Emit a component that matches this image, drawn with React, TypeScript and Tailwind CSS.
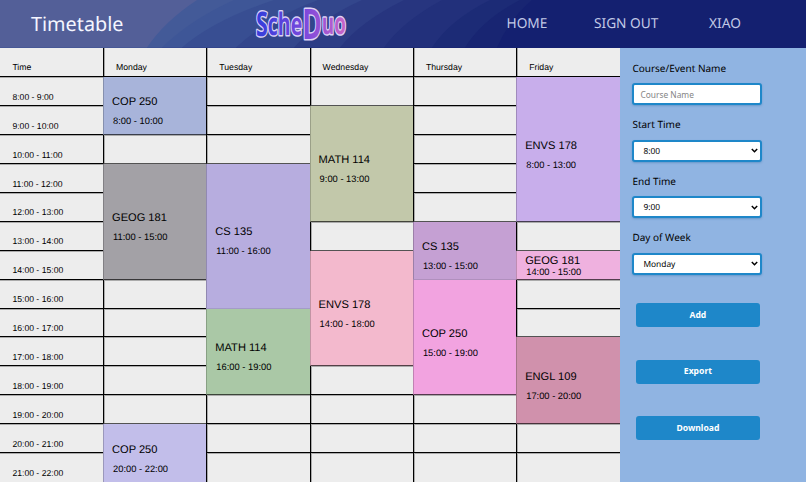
import React from "react";

type Block = { name?: string; time?: string; span: number; color?: string; tight?: boolean };
const free = (n: number): Block[] => Array.from({ length: n }, () => ({ span: 1 }));

const hours = Array.from({ length: 14 }, (_, i) => `${i + 8}:00 - ${i + 9}:00`);

const days: { day: string; blocks: Block[] }[] = [
  {
    day: "Monday",
    blocks: [
      { name: "COP 250", time: "8:00 - 10:00", span: 2, color: "bg-[#a8b4da]" },
      ...free(1),
      { name: "GEOG 181", time: "11:00 - 15:00", span: 4, color: "bg-[#a3a1a6]" },
      ...free(5),
      { name: "COP 250", time: "20:00 - 22:00", span: 2, color: "bg-[#c2beea]" },
    ],
  },
  {
    day: "Tuesday",
    blocks: [
      ...free(3),
      { name: "CS 135", time: "11:00 - 16:00", span: 5, color: "bg-[#b7addf]" },
      { name: "MATH 114", time: "16:00 - 19:00", span: 3, color: "bg-[#aac8a6]" },
      ...free(3),
    ],
  },
  {
    day: "Wednesday",
    blocks: [
      ...free(1),
      { name: "MATH 114", time: "9:00 - 13:00", span: 4, color: "bg-[#c2c8aa]" },
      ...free(1),
      { name: "ENVS 178", time: "14:00 - 18:00", span: 4, color: "bg-[#f3b9cd]" },
      ...free(4),
    ],
  },
  {
    day: "Thursday",
    blocks: [
      ...free(5),
      { name: "CS 135", time: "13:00 - 15:00", span: 2, color: "bg-[#c5a0d3]" },
      { name: "COP 250", time: "15:00 - 19:00", span: 4, color: "bg-[#f2a3e0]" },
      ...free(3),
    ],
  },
  {
    day: "Friday",
    blocks: [
      { name: "ENVS 178", time: "8:00 - 13:00", span: 5, color: "bg-[#c8aeeb]" },
      ...free(1),
      { name: "GEOG 181", time: "14:00 - 15:00", span: 1, color: "bg-[#efb1df]", tight: true },
      ...free(2),
      { name: "ENGL 109", time: "17:00 - 20:00", span: 3, color: "bg-[#d091ac]" },
      ...free(2),
    ],
  },
];

function Logo() {
  return (
    <svg className="h-[46px] w-[110px] overflow-visible" viewBox="0 0 110 46" aria-label="ScheDuo">
      <defs>
        <linearGradient id="ink" gradientUnits="userSpaceOnUse" x1="8" y1="0" x2="150" y2="0">
          <stop offset="0" stopColor="#3a3edb" />
          <stop offset=".5" stopColor="#7d48dc" />
          <stop offset="1" stopColor="#d369c4" />
        </linearGradient>
      </defs>
      <text
        transform="translate(6 0) scale(.63 1)"
        fontFamily="Open Sans, sans-serif"
        fontWeight="700"
        fill="url(#ink)"
        stroke="#dcd2f6"
        strokeWidth="3"
        strokeLinejoin="round"
        paintOrder="stroke"
      >
        <tspan x="0" y="36" fontSize="34">S</tspan>
        <tspan y="35" fontSize="31">che</tspan>
        <tspan y="38.5" fontSize="42">D</tspan>
        <tspan y="34" fontSize="30">uo</tspan>
      </text>
    </svg>
  );
}

function Header() {
  return (
    <header className="relative flex h-[47.6px] shrink-0 overflow-hidden bg-[#142070] text-[#c2c9e6]">
      <svg className="absolute inset-0 h-full w-full" viewBox="0 0 806 48" preserveAspectRatio="none">
        <path fill="#182572" d="M0 0H532Q509 20 497 48H0Z" />
        <path fill="#1c2b76" d="M0 0H520Q482 20 465 48H0Z" />
        <path fill="#22307b" d="M0 0H490Q450 20 432 48H0Z" />
        <path fill="#27357f" d="M0 0H442Q402 22 384 48H0Z" />
        <path fill="#2d3d85" d="M0 0H404Q360 22 340 48H0Z" />
        <path fill="#33468c" d="M0 0H362Q318 20 294 48H0Z" />
        <path fill="#384e92" d="M0 0H318Q265 20 236 48H0Z" />
        <path fill="#3e5697" d="M0 0H274Q214 20 182 48H0Z" />
        <path fill="#435a98" d="M0 0H234Q190 20 162 48H0Z" />
        <path fill="#535f98" d="M0 0H197Q164 22 147 48H0Z" />
      </svg>
      <h1 className="relative w-[250px] pl-[31px] pt-[9.6px] text-[19.8px] leading-7 text-[#f5f6ff]">Timetable</h1>
      <div className="relative w-[256.5px]"><Logo /></div>
      <nav className="relative flex pt-[14.4px] text-[13.7px] leading-5">
        <span className="w-[87.5px]">HOME</span>
        <span className="w-[115px]">SIGN OUT</span>
        <span>XIAO</span>
      </nav>
    </header>
  );
}

function DayColumn({ day, blocks }: { day: string; blocks: Block[] }) {
  return (
    <div className="grid min-w-0 grid-rows-[29.6px_repeat(13,28.93px)_29.93px]">
      <div className="border-b border-l border-black pl-[12px] pt-[13px] text-[8.7px] leading-3 shadow-[inset_1px_0_0_rgba(0,0,0,0.3)]">{day}</div>
      {blocks.map((b, i) => {
        const next = blocks[i + 1];
        if (!b.name) {
          return (
            <div
              key={i}
              className={`border-b border-l shadow-[inset_1px_1px_0_rgba(0,0,0,0.28)] ${next && next.name ? "border-b-black/65 border-l-black" : "border-black"}`}
            />
          );
        }
        return (
          <div
            key={i}
            style={{ gridRow: `span ${b.span}` }}
            className={`flex flex-col justify-center border-b border-l border-l-black/20 pl-[8px] ${next && next.name ? "border-b-black/10" : "border-b-black/65"} ${b.color} ${b.tight ? "pt-[5px]" : "gap-[6px] pt-[11.4px]"}`}
          >
            <div className={b.tight ? "text-[11.1px] leading-[11px]" : "text-[11.1px] leading-[14px]"}>{b.name}</div>
            <div className={b.tight ? "pl-[1px] text-[9.35px] leading-[11px]" : "pl-[1px] text-[9.35px] leading-3"}>{b.time}</div>
          </div>
        );
      })}
    </div>
  );
}

function Field({ label, value }: { label: string; value: string }) {
  return (
    <div className="h-[56.5px]">
      <div className="text-[10px] leading-4">{label}</div>
      <div className="mt-[7.2px] flex h-[22px] w-[130px] items-center justify-between rounded-[3px] border-2 border-[#1e87c9] bg-white pl-[9px] pr-[2px] text-[8.4px] shadow-[0_1px_2px_rgba(30,100,160,0.35)]">
        <span className="pt-[2px] leading-4">{value}</span>
        <svg width="7" height="5" viewBox="0 0 7 5"><path d="M.8 1 3.5 3.7 6.2 1" fill="none" stroke="#000" strokeWidth="1.5" /></svg>
      </div>
    </div>
  );
}

export default function App() {
  return (
    <div className="flex h-[482px] w-[806px] flex-col overflow-hidden bg-[#ededed] font-['Noto_Sans',sans-serif] text-black [text-rendering:geometricPrecision]">
      <Header />
      <main className="flex min-h-0 flex-1">
        <section className="grid h-[434.4px] w-[620px] shrink-0 grid-cols-[103px_repeat(4,103.3px)_1fr] content-start overflow-hidden font-['Liberation_Sans',sans-serif]">
          <div className="grid grid-rows-[29.6px_repeat(13,28.93px)_29.93px] text-[8.65px]">
            <div className="border-b border-black pl-[12.4px] pt-[13px] leading-3">Time</div>
            {hours.map((h) => (
              <div key={h} className="border-b border-black pl-[12.4px] pt-[13.6px] leading-3 shadow-[inset_0_1px_0_rgba(0,0,0,0.28)]">{h}</div>
            ))}
          </div>
          {days.map((d) => <DayColumn key={d.day} {...d} />)}
        </section>
        <aside className="flex-1 bg-[#90b4e2] pl-[12.4px] pt-[12.4px]">
          <div className="h-[56.5px]">
            <div className="text-[10px] leading-4">Course/Event Name</div>
            <input placeholder="Course Name" className="mt-[7.2px] block h-[22px] w-[130px] rounded-[3px] border-2 border-[#1e87c9] bg-white px-[6px] text-[8.4px] shadow-[0_1px_2px_rgba(30,100,160,0.35)] placeholder:text-[#858585]" />
          </div>
          <Field label="Start Time" value="8:00" />
          <Field label="End Time" value="9:00" />
          <Field label="Day of Week" value="Monday" />
          <div className="mt-[17.2px] flex flex-col gap-[32.4px] pl-[3.5px]">
            {["Add", "Export", "Download"].map((t) => (
              <button key={t} className="h-6 w-[124px] rounded-[3px] bg-[#1e87c9] text-[8.6px] font-bold text-white">{t}</button>
            ))}
          </div>
        </aside>
      </main>
    </div>
  );
}
